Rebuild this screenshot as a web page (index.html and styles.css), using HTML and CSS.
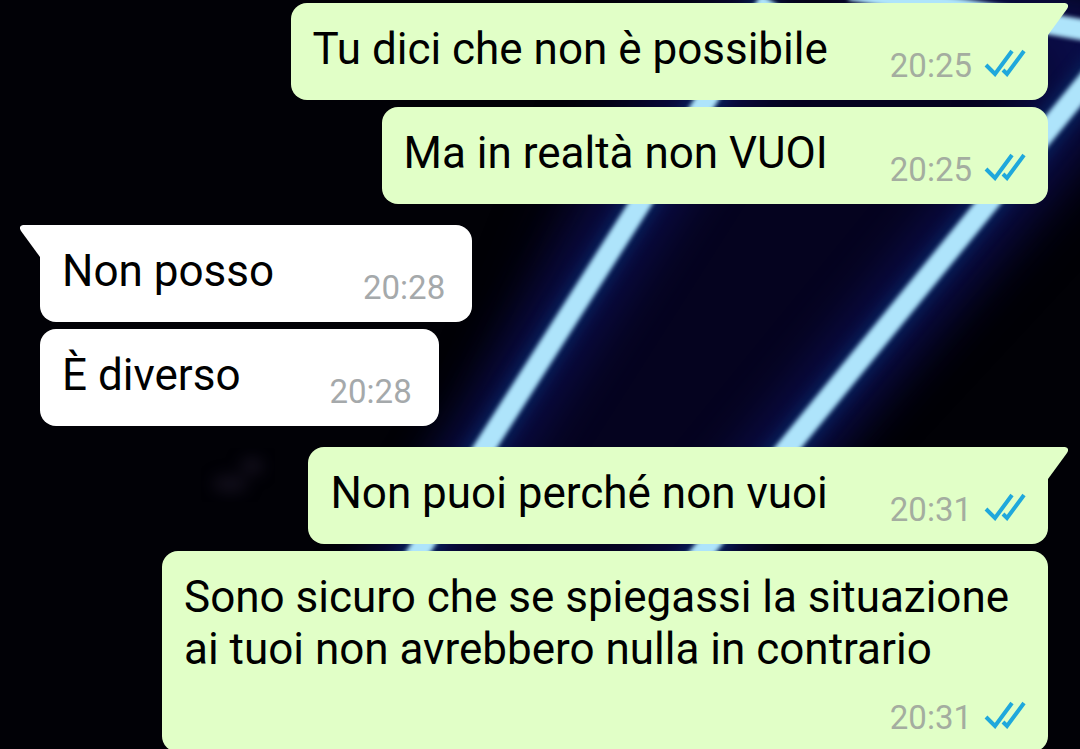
FILE: index.html
```html
<!DOCTYPE html>
<html lang="it">
<head>
  <meta charset="UTF-8">
  <meta name="viewport" content="width=device-width, initial-scale=1.0">
  <title>Chat</title>
  <link rel="stylesheet" href="styles.css">
</head>
<body>
  <!-- Sfondo della chat: fasci di luce -->
  <svg class="wallpaper" viewBox="0 0 1080 749" preserveAspectRatio="xMidYMid slice" aria-hidden="true">
    <defs>
      <filter id="glow" x="-50%" y="-50%" width="200%" height="200%" color-interpolation-filters="sRGB">
        <feGaussianBlur stdDeviation="24"/>
      </filter>
      <filter id="halo" x="-20%" y="-20%" width="140%" height="140%" color-interpolation-filters="sRGB">
        <feGaussianBlur stdDeviation="7"/>
      </filter>
      <filter id="soft" x="-20%" y="-20%" width="140%" height="140%" color-interpolation-filters="sRGB">
        <feGaussianBlur stdDeviation="2"/>
      </filter>
    </defs>
    <rect width="1080" height="749" fill="#010106"/>
    <path d="M640 0H1100V160L840 440L640 640H330L470 420Z" fill="#05031f" filter="url(#glow)"/>
    <g fill="none" stroke="#0c1058" stroke-width="70" opacity="0.75" filter="url(#glow)">
      <path d="M770 0L357 648"/>
      <path d="M1154 0L624 648"/>
      <path d="M850 -10L1090 31"/>
    </g>
    <g fill="none" stroke="#062a63" stroke-width="34" opacity="0.7" filter="url(#halo)">
      <path d="M770 0L357 648"/>
      <path d="M1154 0L624 648"/>
    </g>
    <g fill="none" stroke="#aee4fb" stroke-width="21" filter="url(#soft)">
      <path d="M770 0L357 648"/>
      <path d="M1154 0L624 648"/>
      <path d="M850 -10L1090 31"/>
    </g>
    <g fill="#0f0c18" filter="url(#halo)">
      <ellipse cx="230" cy="484" rx="18" ry="10"/>
      <ellipse cx="252" cy="466" rx="12" ry="10"/>
    </g>
  </svg>

  <svg class="sprite" aria-hidden="true">
    <symbol id="read" viewBox="0 0 42 28">
      <path d="M2 16L11 25L28 2M19 21L23 25L40 2"/>
    </symbol>
  </svg>

  <main class="chat">
    <section class="group">
      <div class="bubble out first">
        <p class="text">Tu dici che non è possibile</p>
        <div class="meta"><time>20:25</time><svg class="check"><use href="#read"/></svg></div>
        <svg class="tail" viewBox="0 0 20 32"><path d="M0 0H17Q22 1 19 6L0 32Z"/></svg>
      </div>
      <div class="bubble out">
        <p class="text">Ma in realtà non VUOI</p>
        <div class="meta"><time>20:25</time><svg class="check"><use href="#read"/></svg></div>
      </div>
    </section>

    <section class="group">
      <div class="bubble in first">
        <p class="text">Non posso</p>
        <div class="meta"><time>20:28</time></div>
        <svg class="tail" viewBox="0 0 20 32"><path d="M20 0H3Q-2 1 1 6L20 32Z"/></svg>
      </div>
      <div class="bubble in">
        <p class="text">È diverso</p>
        <div class="meta"><time>20:28</time></div>
      </div>
    </section>

    <section class="group">
      <div class="bubble out first">
        <p class="text">Non puoi perché non vuoi</p>
        <div class="meta"><time>20:31</time><svg class="check"><use href="#read"/></svg></div>
        <svg class="tail" viewBox="0 0 20 32"><path d="M0 0H17Q22 1 19 6L0 32Z"/></svg>
      </div>
      <div class="bubble out long">
        <p class="text">Sono sicuro che se spiegassi la situazione ai tuoi non avrebbero nulla in contrario</p>
        <div class="meta"><time>20:31</time><svg class="check"><use href="#read"/></svg></div>
      </div>
    </section>
  </main>
</body>
</html>
```
FILE: styles.css
```css
* {
  box-sizing: border-box;
}
body {
  margin: 0;
  min-height: 100vh;
  overflow: hidden;
  background: #010106;
  color: #000;
  font-family: Roboto, sans-serif;
}
.wallpaper {
  position: fixed;
  inset: 0;
  width: 100%;
  height: 100%;
}
.sprite {
  position: absolute;
  width: 0;
  height: 0;
}
.chat {
  position: relative;
  display: flex;
  flex-direction: column;
  gap: 21px;
  padding: 3px 32px 0 40px;
}
.group {
  display: flex;
  flex-direction: column;
  gap: 7px;
}
.bubble {
  position: relative;
  display: flex;
  align-items: flex-end;
  max-width: 886px;
  padding: 20px 22px 14px 22px;
  border-radius: 16px;
}
.out {
  align-self: flex-end;
  gap: 62px;
  background: #e1ffc7;
  fill: #e1ffc7;
}
.in {
  align-self: flex-start;
  gap: 89px;
  padding-right: 27px;
  background: #fff;
  fill: #fff;
}
.out.first {
  border-top-right-radius: 0;
}
.in.first {
  border-top-left-radius: 0;
}
.text {
  margin: 0 0 11px;
  font-size: 44px;
  line-height: 52px;
}
.meta {
  display: flex;
  align-items: flex-start;
  gap: 12px;
  color: #a5a9ab;
  font-size: 33px;
  line-height: 40px;
}
.out .meta {
  color: #a4ada0;
}
.long {
  flex-direction: column;
  gap: 12px;
}
.check {
  width: 42px;
  height: 28px;
  margin-top: 3px;
  fill: none;
  stroke: #1fa8dc;
  stroke-width: 4;
}
/* punta del fumetto */
.tail {
  position: absolute;
  top: 0;
  width: 20px;
  height: 32px;
}
.out .tail {
  left: 100%;
}
.in .tail {
  right: 100%;
}
```
